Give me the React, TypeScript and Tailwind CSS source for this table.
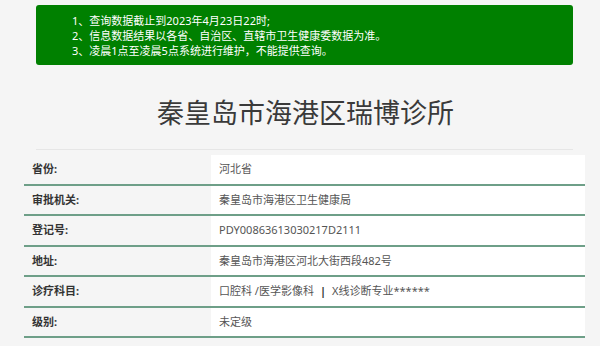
import React from 'react';

const NOTICES: string[] = [
  '1、查询数据截止到2023年4月23日22时;',
  '2、信息数据结果以各省、自治区、直辖市卫生健康委数据为准。',
  '3、凌晨1点至凌晨5点系统进行维护，不能提供查询。',
];

const ROWS: { label: string; value: React.ReactNode }[] = [
  { label: '省份:', value: '河北省' },
  { label: '审批机关:', value: '秦皇岛市海港区卫生健康局' },
  { label: '登记号:', value: 'PDY00863613030217D2111' },
  { label: '地址:', value: '秦皇岛市海港区河北大街西段482号' },
  {
    label: '诊疗科目:',
    value: (
      <>
        口腔科 /医学影像科<span className="mx-[6px] font-bold text-[#333]">|</span>X线诊断专业******
      </>
    ),
  },
  { label: '级别:', value: '未定级' },
];

const App: React.FC = () => {
  return (
    <div
      className="min-h-screen w-[600px] h-[346px] overflow-hidden bg-[#f5f5f5]"
      style={{ fontFamily: '"Noto Sans", "Noto Sans CJK SC", sans-serif' }}
    >
      <div className="ml-[24px] w-[561px] pt-[5px]">
        {/* 提示框 */}
        <div className="mx-[12px] rounded-[3px] bg-[#008000] pl-[36px] pt-[8px] pb-[7px] text-[11px] leading-[15px] text-white">
          {NOTICES.map((line) => (
            <p key={line}>{line}</p>
          ))}
        </div>

        <h1 className="mt-[28px] text-center text-[27px] leading-[40px] text-[#3a3a3a] pl-[2px]">
          秦皇岛市海港区瑞博诊所
        </h1>
        <div className="mx-[12px] mt-[16px] h-px bg-[#e6e6e6]" />

        <div className="mt-[5px]">
          {ROWS.map((row) => (
            <div
              key={row.label}
              className="flex h-[30.5px] border-b-2 border-[#6e9f88] text-[11px]"
            >
              <div className="flex w-[187px] items-center pl-[8px] font-bold text-[#333]">
                {row.label}
              </div>
              <div className="flex flex-1 items-center bg-white pl-[8px] text-[#555]">
                {row.value}
              </div>
            </div>
          ))}
        </div>
      </div>
    </div>
  );
};

export default App;
